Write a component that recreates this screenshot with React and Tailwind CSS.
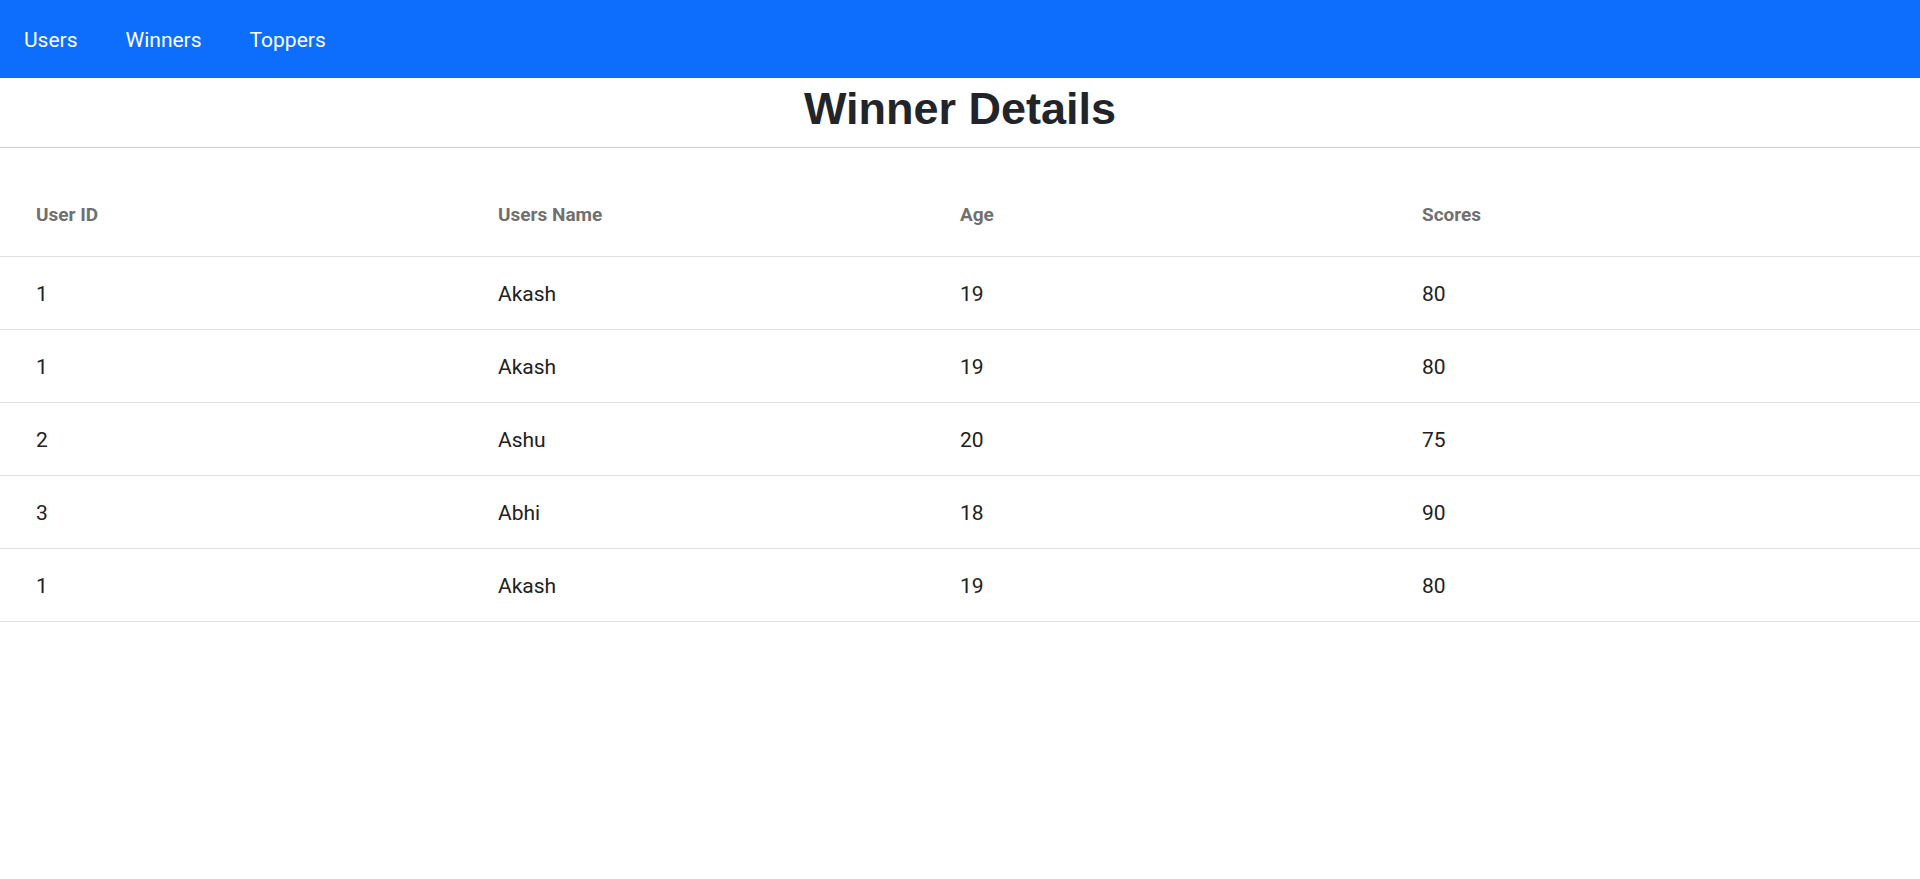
const winners = [
  { id: 1, name: 'Akash', age: 19, score: 80 },
  { id: 1, name: 'Akash', age: 19, score: 80 },
  { id: 2, name: 'Ashu', age: 20, score: 75 },
  { id: 3, name: 'Abhi', age: 18, score: 90 },
  { id: 1, name: 'Akash', age: 19, score: 80 },
];

const links = ['Users', 'Winners', 'Toppers'];

export default function App() {
  return (
    <div className="min-h-screen bg-white font-['Roboto',sans-serif]">
      {/* Navbar */}
      <nav className="h-[78px] bg-[#0d6efd] flex items-center pl-[24px] pt-[2px] gap-[48px]">
        {links.map((l) => (
          <a key={l} href="#" className="text-white text-[21px] leading-none">
            {l}
          </a>
        ))}
      </nav>

      {/* Title */}
      <h1 className="mt-[4px] mb-[12px] text-center text-[45px] leading-[53px] font-bold text-[#212529] font-['Liberation_Sans',Arial,sans-serif]">
        Winner Details
      </h1>
      <hr className="border-0 border-t border-[#cccccc]" />

      {/* Table */}
      <div>
        <div className="grid grid-cols-4 px-[36px] h-[109px] pt-[53px] border-b border-[#e0e0e0]">
          <div className="text-[19px] leading-[28px] font-bold text-[#707070]">User ID</div>
          <div className="text-[19px] leading-[28px] font-bold text-[#707070]">Users Name</div>
          <div className="text-[19px] leading-[28px] font-bold text-[#707070]">Age</div>
          <div className="text-[19px] leading-[28px] font-bold text-[#707070]">Scores</div>
        </div>
        {winners.map((w, i) => (
          <div
            key={i}
            className="grid grid-cols-4 items-center px-[36px] pt-[3px] h-[73px] border-b border-[#e0e0e0] text-[21px] text-[#212121]"
          >
            <div>{w.id}</div>
            <div>{w.name}</div>
            <div>{w.age}</div>
            <div>{w.score}</div>
          </div>
        ))}
      </div>
    </div>
  );
}
